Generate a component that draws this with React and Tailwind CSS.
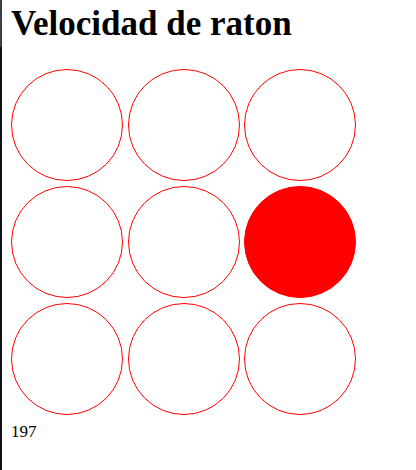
export default function App() {
  const filled = 5;
  return (
    <div className="flex h-[470px] w-[416px] bg-white overflow-hidden" style={{ fontFamily: '"Liberation Serif", "Times New Roman", serif' }}>
      <div className="flex w-[2px] flex-col">
        <div className="h-[47px] bg-[#3b3e43]" />
        <div className="flex-1 bg-[#0d1117]" />
      </div>
      <div className="flex flex-col pl-[9px] pt-[4px]">
        <h1 className="text-[35px] font-bold leading-[40px] text-black">Velocidad de raton</h1>
        <div className="mt-[25px] grid grid-cols-[repeat(3,112px)] gap-x-[4.5px] gap-y-[5px]">
          {Array.from({ length: 9 }).map((_, i) => (
            <div
              key={i}
              className={
                i === filled
                  ? "h-[112px] w-[112px] rounded-full border border-[#ff0000] bg-[#ff0000]"
                  : "h-[112px] w-[112px] rounded-full border border-[#ff0000]"
              }
            />
          ))}
        </div>
        <div className="mt-[7px] text-[17px] leading-[20px] text-black">197</div>
      </div>
    </div>
  );
}
